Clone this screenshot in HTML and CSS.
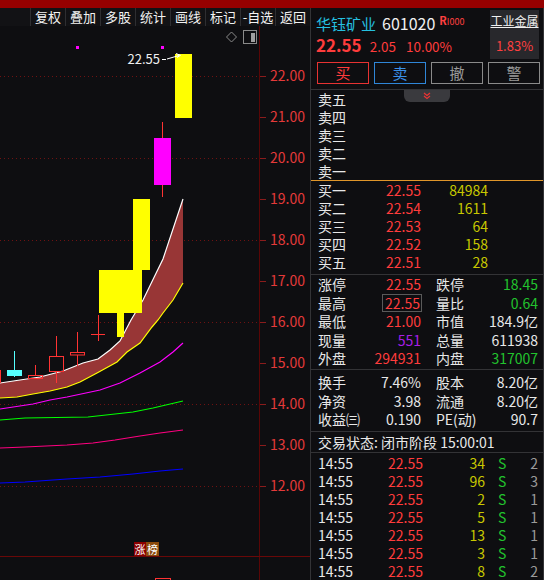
FILE: index.html
```html
<!DOCTYPE html>
<html lang="zh-CN">
<head>
<meta charset="utf-8">
<title>华钰矿业 601020</title>
<link rel="stylesheet" href="styles.css">
</head>
<body>
<div class="topbar"></div>
<div class="app">
  <div class="left">
    <div class="toolbar">
      <span class="tb">复权</span><span class="tb">叠加</span><span class="tb">多股</span><span class="tb">统计</span><span class="tb">画线</span><span class="tb">标记</span><span class="tb">-自选</span><span class="tb">返回</span>
    </div>
    <div class="chart">
      <svg class="chart-svg" viewBox="0 26 310 554" width="310" height="554">
        <g stroke="#6e1212" stroke-dasharray="1 3" stroke-width="1">
          <line x1="0" y1="76.5" x2="259" y2="76.5"/>
          <line x1="0" y1="158.5" x2="259" y2="158.5"/>
          <line x1="0" y1="240.5" x2="259" y2="240.5"/>
          <line x1="0" y1="322.5" x2="259" y2="322.5"/>
          <line x1="0" y1="404.5" x2="259" y2="404.5"/>
          <line x1="0" y1="486.5" x2="259" y2="486.5"/>
        </g>
        <line x1="259.5" y1="26" x2="259.5" y2="580" stroke="#5a0606"/>
        <g stroke="#8a1c1c">
          <line x1="260" y1="76.5" x2="266" y2="76.5"/>
          <line x1="260" y1="117.5" x2="266" y2="117.5"/>
          <line x1="260" y1="158.5" x2="266" y2="158.5"/>
          <line x1="260" y1="199.5" x2="266" y2="199.5"/>
          <line x1="260" y1="240.5" x2="266" y2="240.5"/>
          <line x1="260" y1="281.5" x2="266" y2="281.5"/>
          <line x1="260" y1="322.5" x2="266" y2="322.5"/>
          <line x1="260" y1="363.5" x2="266" y2="363.5"/>
          <line x1="260" y1="404.5" x2="266" y2="404.5"/>
          <line x1="260" y1="445.5" x2="266" y2="445.5"/>
          <line x1="260" y1="486.5" x2="266" y2="486.5"/>
        </g>
        <g class="axis-txt" text-anchor="end">
          <text x="305" y="81">22.00</text>
          <text x="305" y="122">21.00</text>
          <text x="305" y="163">20.00</text>
          <text x="305" y="204">19.00</text>
          <text x="305" y="245">18.00</text>
          <text x="305" y="286">17.00</text>
          <text x="305" y="327">16.00</text>
          <text x="305" y="368">15.00</text>
          <text x="305" y="409">14.00</text>
          <text x="305" y="450">13.00</text>
          <text x="305" y="491">12.00</text>
        </g>
        <line x1="0" y1="556.5" x2="310" y2="556.5" stroke="#6a0808"/>

        <!-- icons -->
        <path d="M231.5 32 L236.5 37 L231.5 42 L226.5 37 Z" fill="none" stroke="#8a8a8a"/>
        <rect x="243.5" y="30.5" width="13" height="13" fill="none" stroke="#8a8a8a"/>
        <rect x="251" y="33" width="4" height="9" fill="#a0a0a0"/>

        <!-- band -->
        <polygon fill="#983636" points="0,383 20,380 40,377 63,371 83,363 98,359 110,350 120,341 131,320 143,300 163,259 183,199 183,283 173,300 163,313 158,320 152,327 140,343 127,352 117,362 97,373 80,382 67,387 50,391 33,394 17,397 0,398"/>
        <polyline fill="none" stroke="#ffffff" stroke-width="1.2" points="0,383 20,380 40,377 63,371 83,363 98,359 110,350 120,341 131,320 143,300 163,259 183,199"/>
        <polyline fill="none" stroke="#ffff00" stroke-width="1.2" points="0,398 17,397 33,394 50,391 67,387 80,382 97,373 117,362 127,352 140,343 152,327 158,320 163,313 173,300 183,283"/>
        <polyline fill="none" stroke="#ff00ff" stroke-width="1.2" points="0,409 33,404 50,400 67,397 100,390 120,383 140,373 160,362 173,352 183,343"/>
        <polyline fill="none" stroke="#00ff00" stroke-width="1.2" points="0,420 25,418 88,417 133,412 153,408 183,401"/>
        <polyline fill="none" stroke="#ff0080" stroke-width="1.2" points="0,448 25,447 67,445 93,443 115,440 140,436 160,433 183,430"/>
        <polyline fill="none" stroke="#0000ff" stroke-width="1.2" points="0,483 25,482 67,479 100,477 133,474 160,471 183,469"/>

        <!-- candles -->
        <line x1="0.5" y1="370" x2="0.5" y2="383" stroke="#ff3333"/>
        <line x1="14.5" y1="351" x2="14.5" y2="377" stroke="#55ffff"/>
        <rect x="7" y="370" width="15" height="6" fill="#55ffff"/>
        <line x1="35.5" y1="365" x2="35.5" y2="376" stroke="#ff3333"/>
        <rect x="28.5" y="375.5" width="14" height="3" fill="none" stroke="#ff3333"/>
        <line x1="56.5" y1="336" x2="56.5" y2="356" stroke="#ff3333"/>
        <line x1="56.5" y1="372" x2="56.5" y2="383" stroke="#ff3333"/>
        <rect x="49.5" y="356.5" width="14" height="15" fill="none" stroke="#ff3333"/>
        <line x1="77.5" y1="332" x2="77.5" y2="352" stroke="#ff3333"/>
        <line x1="77.5" y1="355" x2="77.5" y2="366" stroke="#ff3333"/>
        <rect x="70.5" y="352.5" width="14" height="2.5" fill="none" stroke="#ff3333"/>
        <line x1="98.5" y1="315" x2="98.5" y2="341" stroke="#ff3333"/>
        <line x1="91" y1="334.5" x2="105" y2="334.5" stroke="#ff3333"/>
        <rect x="99" y="270" width="43" height="43" fill="#ffff00"/>
        <rect x="117" y="312" width="7" height="25" fill="#ffff00"/>
        <rect x="133" y="199" width="17" height="71" fill="#ffff00"/>
        <line x1="162.5" y1="122" x2="162.5" y2="197" stroke="#ff3333"/>
        <rect x="154" y="138" width="17" height="47" fill="#ff00ff"/>
        <rect x="175" y="54" width="17" height="64" fill="#ffff00"/>

        <!-- markers -->
        <rect x="76" y="46" width="3" height="3" fill="#ff00ff"/>
        <rect x="161" y="46" width="3" height="3" fill="#ff00ff"/>
        <text class="lbl-txt" x="160" y="64" text-anchor="end">22.55</text>
        <path d="M162 59.5 L166 59.5 M167 59 L179 55.5 M176 53.5 L180.5 55.3 L177 57.5" fill="none" stroke="#ffffff" stroke-width="1"/>

        <!-- badge -->
        <rect x="134" y="542" width="12" height="14" fill="#8b0000"/>
        <rect x="146" y="542" width="13" height="14" fill="#8b4a0c"/>
        <text class="badge-txt" x="140" y="553.5" text-anchor="middle">涨</text>
        <text class="badge-txt" x="152.5" y="553.5" text-anchor="middle">榜</text>
        <rect x="155.5" y="578.5" width="15" height="6" fill="none" stroke="#ff3333"/>
      </svg>
    </div>
  </div>

  <div class="panel">
    <div class="head">
      <div class="head-main">
        <div class="name-row"><span class="name">华钰矿业</span><span class="code">601020</span><span class="tag"><b>R</b>I000</span></div>
        <div class="price-row"><span class="price">22.55</span><span class="chg">2.05</span><span class="pct">10.00%</span></div>
      </div>
      <div class="ind"><span class="ind-name">工业金属</span><span class="ind-pct">1.83%</span></div>
    </div>
    <div class="btns">
      <span class="btn buy">买</span><span class="btn sell">卖</span><span class="btn gray">撤</span><span class="btn gray">警</span>
    </div>

    <div class="book sell-book">
      <div class="tab"><svg width="10" height="8" viewBox="0 0 10 8"><polyline points="2,1 5,3.5 8,1" fill="none" stroke="#ee3333" stroke-width="1.2"/><polyline points="2,4 5,6.5 8,4" fill="none" stroke="#ee3333" stroke-width="1.2"/></svg></div>
      <div class="brow"><span>卖五</span><span></span><span></span></div>
      <div class="brow"><span>卖四</span><span></span><span></span></div>
      <div class="brow"><span>卖三</span><span></span><span></span></div>
      <div class="brow"><span>卖二</span><span></span><span></span></div>
      <div class="brow"><span>卖一</span><span></span><span></span></div>
    </div>

    <div class="book buy-book">
      <div class="brow"><span>买一</span><span class="num red">22.55</span><span class="num yel">84984</span></div>
      <div class="brow"><span>买二</span><span class="num red">22.54</span><span class="num yel">1611</span></div>
      <div class="brow"><span>买三</span><span class="num red">22.53</span><span class="num yel">64</span></div>
      <div class="brow"><span>买四</span><span class="num red">22.52</span><span class="num yel">158</span></div>
      <div class="brow"><span>买五</span><span class="num red">22.51</span><span class="num yel">28</span></div>
    </div>

    <div class="stats">
      <div class="srow"><span>涨停</span><span class="num red">22.55</span><span class="lab2">跌停</span><span class="num grn">18.45</span></div>
      <div class="srow"><span>最高</span><span class="num red"><span class="boxed">22.55</span></span><span class="lab2">量比</span><span class="num grn">0.64</span></div>
      <div class="srow"><span>最低</span><span class="num red">21.00</span><span class="lab2">市值</span><span class="num">184.9亿</span></div>
      <div class="srow"><span>现量</span><span class="num pur">551</span><span class="lab2">总量</span><span class="num">611938</span></div>
      <div class="srow"><span>外盘</span><span class="num red">294931</span><span class="lab2">内盘</span><span class="num grn">317007</span></div>
    </div>

    <div class="stats stats2">
      <div class="srow"><span>换手</span><span class="num">7.46%</span><span class="lab2">股本</span><span class="num">8.20亿</span></div>
      <div class="srow"><span>净资</span><span class="num">3.98</span><span class="lab2">流通</span><span class="num">8.20亿</span></div>
      <div class="srow"><span>收益㈢</span><span class="num">0.190</span><span class="lab2">PE(动)</span><span class="num">90.7</span></div>
    </div>

    <div class="status">交易状态: 闭市阶段 15:00:01</div>

    <div class="trades">
      <div class="trow"><span>14:55</span><span class="num red">22.55</span><span class="num yel">34</span><span class="s">S</span><span class="num gry">2</span></div>
      <div class="trow"><span>14:55</span><span class="num red">22.55</span><span class="num yel">96</span><span class="s">S</span><span class="num gry">3</span></div>
      <div class="trow"><span>14:55</span><span class="num red">22.55</span><span class="num yel">2</span><span class="s">S</span><span class="num gry">1</span></div>
      <div class="trow"><span>14:55</span><span class="num red">22.55</span><span class="num yel">5</span><span class="s">S</span><span class="num gry">1</span></div>
      <div class="trow"><span>14:55</span><span class="num red">22.55</span><span class="num yel">13</span><span class="s">S</span><span class="num gry">1</span></div>
      <div class="trow"><span>14:55</span><span class="num red">22.55</span><span class="num yel">3</span><span class="s">S</span><span class="num gry">1</span></div>
      <div class="trow"><span>14:55</span><span class="num red">22.55</span><span class="num yel">8</span><span class="s">S</span><span class="num gry">2</span></div>
    </div>
  </div>
</div>
</body>
</html>
```

FILE: styles.css
```css
* { box-sizing: border-box; margin: 0; padding: 0; }
html, body { background: #0e0e11; }
body {
  width: 544px;
  height: 580px;
  overflow: hidden;
  font-family: "Noto Sans CJK SC", "Noto Sans", sans-serif;
  font-size: 14px;
  color: #e8e8e8;
}
.topbar { height: 8px; background: #960000; }
.app { display: flex; height: 572px; }

.left { width: 310px; display: flex; flex-direction: column; }
.toolbar { height: 18px; display: flex; justify-content: flex-end; background: #121215; }
.tb {
  width: 35px;
  border-left: 1px solid #2e2e31;
  font-size: 13px;
  line-height: 18px;
  text-align: center;
  color: #f2f2f2;
  white-space: nowrap;
}
.chart { flex: 1; overflow: hidden; }
.chart-svg { display: block; }
.axis-txt { font-family: "Noto Sans CJK SC", sans-serif; font-size: 14px; fill: #e43a3a; }
.lbl-txt { font-family: "Noto Sans CJK SC", sans-serif; font-size: 13px; fill: #f0f0f0; }
.badge-txt { font-family: "Noto Sans CJK SC", sans-serif; font-size: 11px; fill: #ffffff; }

.panel {
  width: 234px;
  border-left: 1px solid #333336;
  border-right: 1px solid #333336;
  display: flex;
  flex-direction: column;
  overflow: hidden;
}

.head { height: 56px; display: flex; }
.head-main { flex: 1; padding-left: 5px; }
.name-row { height: 24px; line-height: 24px; white-space: nowrap; }
.name { font-size: 15px; color: #25c0e0; }
.code { font-size: 16px; color: #f0f0f0; margin-left: 6px; }
.tag { font-size: 9px; color: #ff4040; margin-left: 4px; vertical-align: 5px; }
.tag b { font-size: 11px; font-weight: 700; }
.price-row { height: 25px; line-height: 25px; white-space: nowrap; color: #ff3c3c; }
.price { font-size: 17px; font-weight: 700; }
.chg { font-size: 13.5px; margin-left: 8px; }
.pct { font-size: 13.5px; margin-left: 10px; }
.ind {
  width: 49px;
  height: 49px;
  margin: 2px 4px 0 0;
  background: #28282c;
  display: flex;
  flex-direction: column;
  align-items: center;
}
.ind-name {
  font-size: 12px;
  line-height: 14px;
  margin-top: 4px;
  text-decoration: underline;
  color: #f0f0f0;
  white-space: nowrap;
}
.ind-pct { font-size: 13px; line-height: 16px; margin-top: 10px; color: #ff4040; }

.btns { display: flex; gap: 5px; padding-left: 6px; height: 22px; margin-bottom: 5px; }
.btn {
  width: 52px;
  height: 22px;
  border: 1px solid;
  font-size: 15px;
  line-height: 20px;
  text-align: center;
}
.btn.buy { border-color: #e83232; color: #ff3c3c; }
.btn.sell { border-color: #2f86d8; color: #3a90e8; }
.btn.gray { border-color: #8a8a8a; color: #9a9a9a; }

.book { position: relative; }
.sell-book { border-top: 1px solid #333336; }
.buy-book { border-top: 1px solid #e0962a; padding-bottom: 3px; }
.tab {
  position: absolute;
  left: 93px;
  top: 0;
  width: 46px;
  height: 12px;
  background: #3a3a3e;
  border-radius: 0 0 6px 6px;
  display: flex;
  justify-content: center;
  align-items: center;
}
.tab svg { display: block; }
.brow {
  display: grid;
  grid-template-columns: 44px 59px 67px;
  height: 18px;
  line-height: 18px;
  padding-left: 7px;
  white-space: nowrap;
}
.num { text-align: right; }
.red { color: #ff3c3c; }
.yel { color: #c8c800; }
.grn { color: #22c32e; }
.pur { color: #a81ee6; }
.gry { color: #9a9a9a; }

.stats { border-top: 1px solid #333336; padding-bottom: 1px; }
.stats .srow { height: 18.6px; line-height: 18.6px; }
.stats2 { padding-top: 3px; padding-bottom: 2.5px; }
.stats2 .srow { height: 18.5px; line-height: 18.5px; }
.srow {
  display: grid;
  grid-template-columns: 44px 59px 59px 58px;
  padding-left: 7px;
  white-space: nowrap;
}
.lab2 { padding-left: 15px; }
.boxed {
  display: inline-block;
  border: 1px solid #5a5a5a;
  line-height: 16px;
  padding: 0 1px 0 2px;
  margin-right: -1px;
}

.status {
  border-top: 1px solid #333336;
  border-bottom: 1px solid #333336;
  height: 22px;
  line-height: 20px;
  padding-left: 7px;
  white-space: nowrap;
}

.trades { padding-top: 1px; }
.trow {
  display: grid;
  grid-template-columns: 44px 61px 62px 25px 28px;
  height: 18px;
  line-height: 18px;
  padding-left: 7px;
  white-space: nowrap;
}
.trow .s { color: #22c32e; padding-left: 13px; }
```
